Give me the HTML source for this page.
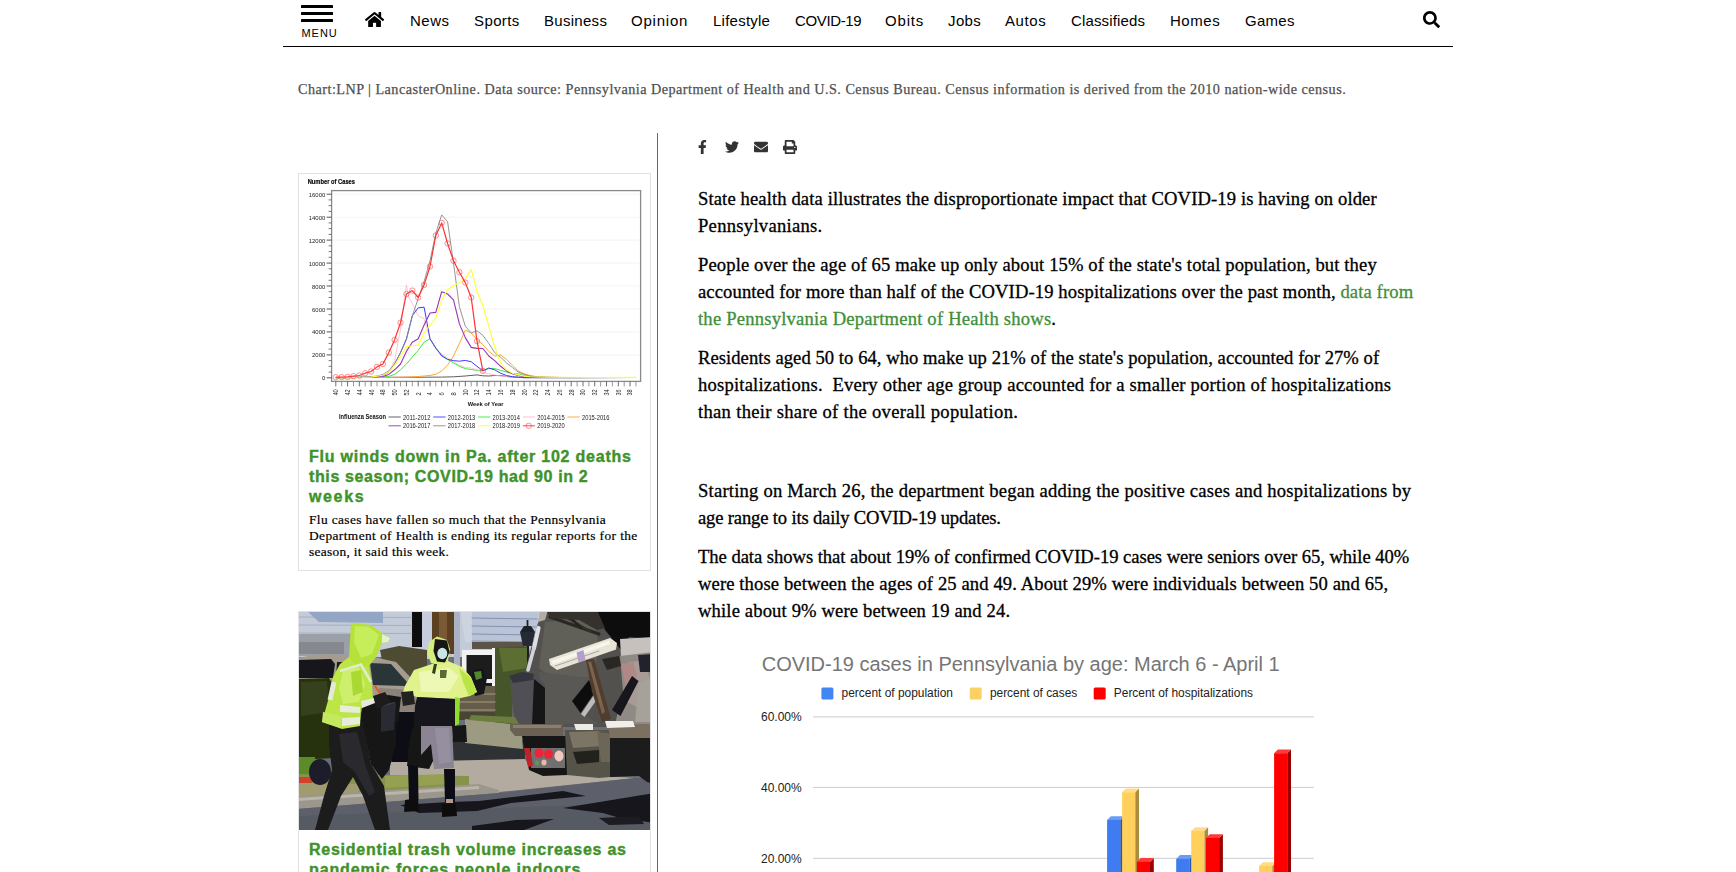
<!DOCTYPE html>
<html lang="en">
<head>
<meta charset="utf-8">
<title>LancasterOnline</title>
<style>
*{box-sizing:border-box;margin:0;padding:0}
html,body{width:1736px;height:872px;overflow:hidden;background:#fff}
body{position:relative;font-family:"Liberation Sans",sans-serif;color:#000}
.abs{position:absolute}
/* nav */
.bar{position:absolute;left:301px;width:32px;height:3px;background:#000;border-radius:0.5px}
.menu{position:absolute;left:301.5px;top:27px;font-size:11px;line-height:12px;letter-spacing:0.95px;color:#000}
.nav a{position:absolute;top:12px;font-size:15px;line-height:18px;color:#000;text-decoration:none;white-space:nowrap}
.navline{position:absolute;left:283px;top:46px;width:1170px;height:1px;background:#000}
/* caption */
.cap{position:absolute;left:298px;top:80px;font-family:"Liberation Serif",serif;font-size:14.2px;line-height:18px;color:#505050;white-space:nowrap;-webkit-text-stroke:0.25px #505050}
/* divider */
.divider{position:absolute;left:657px;top:133px;width:1px;height:760px;background:#67676d}
/* cards */
.card{position:absolute;left:298px;width:353px;border:1px solid #e2e2e2;background:#fff}
.hl{position:absolute;left:309px;font-weight:bold;font-size:16px;line-height:20px;color:#40922a;white-space:nowrap;-webkit-text-stroke:0.4px #40922a}
.sm{position:absolute;left:309px;font-family:"Liberation Serif",serif;font-size:13.4px;line-height:16px;color:#000;white-space:nowrap;-webkit-text-stroke:0.2px #000}
/* article */
.p{position:absolute;left:698px;margin-top:-1px;font-family:"Liberation Serif",serif;font-size:18.6px;line-height:27px;color:#000;white-space:nowrap;-webkit-text-stroke:0.3px #000}
.p .g{color:#3f8f3a;-webkit-text-stroke:0.3px #3f8f3a}
</style>
<style id="ls">
#n1{letter-spacing:0.521px}
#n2{letter-spacing:0.390px}
#n3{letter-spacing:0.291px}
#n4{letter-spacing:0.785px}
#n5{letter-spacing:0.241px}
#n6{letter-spacing:-0.373px}
#n7{letter-spacing:0.837px}
#n8{letter-spacing:0.378px}
#n9{letter-spacing:0.568px}
#n10{letter-spacing:0.152px}
#n11{letter-spacing:0.537px}
#n12{letter-spacing:0.268px}
#cap{letter-spacing:0.480px}
#h1{letter-spacing:0.771px}
#h2{letter-spacing:0.620px}
#h3{letter-spacing:1.631px}
#h4{letter-spacing:0.751px}
#h5{letter-spacing:0.864px}
#s1{letter-spacing:0.373px}
#s2{letter-spacing:0.404px}
#s3{letter-spacing:0.300px}
#l1{letter-spacing:0.118px}
#l2{letter-spacing:0.277px}
#l3{letter-spacing:0.115px}
#l4{letter-spacing:0.113px}
#l5{letter-spacing:0.207px}
#l6{letter-spacing:0.051px}
#l7{letter-spacing:0.199px}
#l8{letter-spacing:0.302px}
#l9{letter-spacing:0.209px}
#l10{letter-spacing:-0.163px}
#l11{letter-spacing:-0.039px}
#l12{letter-spacing:0.111px}
#l13{letter-spacing:0.145px}
</style>
</head>
<body>

<!-- NAV -->
<div class="bar" style="top:5px"></div>
<div class="bar" style="top:12px"></div>
<div class="bar" style="top:19px"></div>
<div class="menu">MENU</div>
<svg class="abs" style="left:365px;top:10.5px" width="19.1" height="17" viewBox="0 0 576 512"><path fill="#000" d="M280.37 148.26L96 300.11V464a16 16 0 0 0 16 16l112.060-.29a16 16 0 0 0 15.920-16V368a16 16 0 0 1 16-16h64a16 16 0 0 1 16 16v95.640a16 16 0 0 0 16 16.050L464 480a16 16 0 0 0 16-16V300L295.670 148.260a12.190 12.190 0 0 0-15.300 0zM571.600 251.470L488 182.560V44.050a12 12 0 0 0-12-12h-56a12 12 0 0 0-12 12v72.610L318.470 43a48 48 0 0 0-61 0L4.340 251.470a12 12 0 0 0-1.600 16.900l25.500 31A12 12 0 0 0 45.150 301l235.220-193.740a12.190 12.190 0 0 1 15.300 0L530.900 301a12 12 0 0 0 16.900-1.600l25.500-31a12 12 0 0 0-1.700-16.930z"/></svg>
<div class="nav">
<a id="n1" style="left:410px">News</a>
<a id="n2" style="left:474px">Sports</a>
<a id="n3" style="left:544px">Business</a>
<a id="n4" style="left:631px">Opinion</a>
<a id="n5" style="left:713px">Lifestyle</a>
<a id="n6" style="left:795px">COVID-19</a>
<a id="n7" style="left:885px">Obits</a>
<a id="n8" style="left:948px">Jobs</a>
<a id="n9" style="left:1005px">Autos</a>
<a id="n10" style="left:1071px">Classifieds</a>
<a id="n11" style="left:1170px">Homes</a>
<a id="n12" style="left:1245px">Games</a>
</div>
<svg class="abs" style="left:1423px;top:10.6px" width="17" height="17" viewBox="0 0 512 512"><path fill="#000" d="M505 442.700L405.300 343c-4.500-4.500-10.600-7-17-7H372c27.600-35.300 44-79.700 44-128C416 93.100 322.900 0 208 0S0 93.100 0 208s93.100 208 208 208c48.300 0 92.700-16.400 128-44v16.300c0 6.400 2.500 12.500 7 17l99.700 99.700c9.400 9.400 24.600 9.400 33.900 0l28.300-28.300c9.400-9.400 9.400-24.600.1-34zM208 336c-70.700 0-128-57.200-128-128 0-70.700 57.200-128 128-128 70.700 0 128 57.200 128 128 0 70.700-57.200 128-128 128z"/></svg>
<div class="navline"></div>

<!-- CAPTION -->
<div class="cap" id="cap">Chart:LNP | LancasterOnline. Data source: Pennsylvania Department of Health and U.S. Census Bureau. Census information is derived from the 2010 nation-wide census.</div>

<!-- DIVIDER -->
<div class="divider"></div>

<!-- LEFT CARD 1 -->
<div class="card" style="top:173px;height:398px"></div>
<!--FLUCHART-->
<svg class="abs" style="left:299px;top:174px" width="351" height="266" viewBox="0 0 351 266" font-family="Liberation Sans, sans-serif">
<defs><filter id="fb" x="-2%" y="-2%" width="104%" height="104%"><feGaussianBlur stdDeviation="0.5"/></filter></defs>
<g filter="url(#fb)">
<text x="8.7" y="10.2" font-size="6.4" font-weight="bold" fill="#000" stroke="#000" stroke-width="0.15" textLength="47.3" lengthAdjust="spacingAndGlyphs">Number of Cases</text>
<rect x="32.6" y="16.6" width="309.0" height="190.8" fill="#fff" stroke="#8a8a8a" stroke-width="1.3"/>
<line x1="27.6" x2="32.6" y1="203.8" y2="203.8" stroke="#444" stroke-width="0.9"/>
<text x="26.2" y="206.3" font-size="5.9" text-anchor="end" fill="#1a1a1a">0</text>
<line x1="33.6" x2="340.6" y1="180.9" y2="180.9" stroke="#efefef" stroke-width="0.7"/>
<line x1="27.6" x2="32.6" y1="180.9" y2="180.9" stroke="#444" stroke-width="0.9"/>
<text x="26.2" y="183.4" font-size="5.9" text-anchor="end" fill="#1a1a1a">2000</text>
<line x1="33.6" x2="340.6" y1="157.9" y2="157.9" stroke="#efefef" stroke-width="0.7"/>
<line x1="27.6" x2="32.6" y1="157.9" y2="157.9" stroke="#444" stroke-width="0.9"/>
<text x="26.2" y="160.4" font-size="5.9" text-anchor="end" fill="#1a1a1a">4000</text>
<line x1="33.6" x2="340.6" y1="135.0" y2="135.0" stroke="#efefef" stroke-width="0.7"/>
<line x1="27.6" x2="32.6" y1="135.0" y2="135.0" stroke="#444" stroke-width="0.9"/>
<text x="26.2" y="137.5" font-size="5.9" text-anchor="end" fill="#1a1a1a">6000</text>
<line x1="33.6" x2="340.6" y1="112.0" y2="112.0" stroke="#efefef" stroke-width="0.7"/>
<line x1="27.6" x2="32.6" y1="112.0" y2="112.0" stroke="#444" stroke-width="0.9"/>
<text x="26.2" y="114.5" font-size="5.9" text-anchor="end" fill="#1a1a1a">8000</text>
<line x1="33.6" x2="340.6" y1="89.1" y2="89.1" stroke="#efefef" stroke-width="0.7"/>
<line x1="27.6" x2="32.6" y1="89.1" y2="89.1" stroke="#444" stroke-width="0.9"/>
<text x="26.2" y="91.6" font-size="5.9" text-anchor="end" fill="#1a1a1a">10000</text>
<line x1="33.6" x2="340.6" y1="66.1" y2="66.1" stroke="#efefef" stroke-width="0.7"/>
<line x1="27.6" x2="32.6" y1="66.1" y2="66.1" stroke="#444" stroke-width="0.9"/>
<text x="26.2" y="68.6" font-size="5.9" text-anchor="end" fill="#1a1a1a">12000</text>
<line x1="33.6" x2="340.6" y1="43.2" y2="43.2" stroke="#efefef" stroke-width="0.7"/>
<line x1="27.6" x2="32.6" y1="43.2" y2="43.2" stroke="#444" stroke-width="0.9"/>
<text x="26.2" y="45.7" font-size="5.9" text-anchor="end" fill="#1a1a1a">14000</text>
<line x1="33.6" x2="340.6" y1="20.2" y2="20.2" stroke="#efefef" stroke-width="0.7"/>
<line x1="27.6" x2="32.6" y1="20.2" y2="20.2" stroke="#444" stroke-width="0.9"/>
<text x="26.2" y="22.7" font-size="5.9" text-anchor="end" fill="#1a1a1a">16000</text>
<line x1="29.6" x2="32.6" y1="198.1" y2="198.1" stroke="#555" stroke-width="0.8"/>
<line x1="29.6" x2="32.6" y1="192.3" y2="192.3" stroke="#555" stroke-width="0.8"/>
<line x1="29.6" x2="32.6" y1="186.6" y2="186.6" stroke="#555" stroke-width="0.8"/>
<line x1="29.6" x2="32.6" y1="175.1" y2="175.1" stroke="#555" stroke-width="0.8"/>
<line x1="29.6" x2="32.6" y1="169.4" y2="169.4" stroke="#555" stroke-width="0.8"/>
<line x1="29.6" x2="32.6" y1="163.6" y2="163.6" stroke="#555" stroke-width="0.8"/>
<line x1="29.6" x2="32.6" y1="152.2" y2="152.2" stroke="#555" stroke-width="0.8"/>
<line x1="29.6" x2="32.6" y1="146.4" y2="146.4" stroke="#555" stroke-width="0.8"/>
<line x1="29.6" x2="32.6" y1="140.7" y2="140.7" stroke="#555" stroke-width="0.8"/>
<line x1="29.6" x2="32.6" y1="129.2" y2="129.2" stroke="#555" stroke-width="0.8"/>
<line x1="29.6" x2="32.6" y1="123.5" y2="123.5" stroke="#555" stroke-width="0.8"/>
<line x1="29.6" x2="32.6" y1="117.7" y2="117.7" stroke="#555" stroke-width="0.8"/>
<line x1="29.6" x2="32.6" y1="106.3" y2="106.3" stroke="#555" stroke-width="0.8"/>
<line x1="29.6" x2="32.6" y1="100.5" y2="100.5" stroke="#555" stroke-width="0.8"/>
<line x1="29.6" x2="32.6" y1="94.8" y2="94.8" stroke="#555" stroke-width="0.8"/>
<line x1="29.6" x2="32.6" y1="83.3" y2="83.3" stroke="#555" stroke-width="0.8"/>
<line x1="29.6" x2="32.6" y1="77.6" y2="77.6" stroke="#555" stroke-width="0.8"/>
<line x1="29.6" x2="32.6" y1="71.8" y2="71.8" stroke="#555" stroke-width="0.8"/>
<line x1="29.6" x2="32.6" y1="60.4" y2="60.4" stroke="#555" stroke-width="0.8"/>
<line x1="29.6" x2="32.6" y1="54.6" y2="54.6" stroke="#555" stroke-width="0.8"/>
<line x1="29.6" x2="32.6" y1="48.9" y2="48.9" stroke="#555" stroke-width="0.8"/>
<line x1="29.6" x2="32.6" y1="37.4" y2="37.4" stroke="#555" stroke-width="0.8"/>
<line x1="29.6" x2="32.6" y1="31.7" y2="31.7" stroke="#555" stroke-width="0.8"/>
<line x1="29.6" x2="32.6" y1="25.9" y2="25.9" stroke="#555" stroke-width="0.8"/>
<line x1="36.8" x2="36.8" y1="207.4" y2="212.4" stroke="#555" stroke-width="0.85"/>
<line x1="42.7" x2="42.7" y1="207.4" y2="212.4" stroke="#888" stroke-width="0.85"/>
<line x1="48.6" x2="48.6" y1="207.4" y2="212.4" stroke="#555" stroke-width="0.85"/>
<line x1="54.5" x2="54.5" y1="207.4" y2="212.4" stroke="#888" stroke-width="0.85"/>
<line x1="60.3" x2="60.3" y1="207.4" y2="212.4" stroke="#555" stroke-width="0.85"/>
<line x1="66.2" x2="66.2" y1="207.4" y2="212.4" stroke="#888" stroke-width="0.85"/>
<line x1="72.1" x2="72.1" y1="207.4" y2="212.4" stroke="#555" stroke-width="0.85"/>
<line x1="78.0" x2="78.0" y1="207.4" y2="212.4" stroke="#888" stroke-width="0.85"/>
<line x1="83.9" x2="83.9" y1="207.4" y2="212.4" stroke="#555" stroke-width="0.85"/>
<line x1="89.8" x2="89.8" y1="207.4" y2="212.4" stroke="#888" stroke-width="0.85"/>
<line x1="95.6" x2="95.6" y1="207.4" y2="212.4" stroke="#555" stroke-width="0.85"/>
<line x1="101.5" x2="101.5" y1="207.4" y2="212.4" stroke="#888" stroke-width="0.85"/>
<line x1="107.4" x2="107.4" y1="207.4" y2="212.4" stroke="#555" stroke-width="0.85"/>
<line x1="113.3" x2="113.3" y1="207.4" y2="212.4" stroke="#888" stroke-width="0.85"/>
<line x1="119.2" x2="119.2" y1="207.4" y2="212.4" stroke="#555" stroke-width="0.85"/>
<line x1="125.1" x2="125.1" y1="207.4" y2="212.4" stroke="#888" stroke-width="0.85"/>
<line x1="131.0" x2="131.0" y1="207.4" y2="212.4" stroke="#555" stroke-width="0.85"/>
<line x1="136.8" x2="136.8" y1="207.4" y2="212.4" stroke="#888" stroke-width="0.85"/>
<line x1="142.7" x2="142.7" y1="207.4" y2="212.4" stroke="#555" stroke-width="0.85"/>
<line x1="148.6" x2="148.6" y1="207.4" y2="212.4" stroke="#888" stroke-width="0.85"/>
<line x1="154.5" x2="154.5" y1="207.4" y2="212.4" stroke="#555" stroke-width="0.85"/>
<line x1="160.4" x2="160.4" y1="207.4" y2="212.4" stroke="#888" stroke-width="0.85"/>
<line x1="166.3" x2="166.3" y1="207.4" y2="212.4" stroke="#555" stroke-width="0.85"/>
<line x1="172.2" x2="172.2" y1="207.4" y2="212.4" stroke="#888" stroke-width="0.85"/>
<line x1="178.0" x2="178.0" y1="207.4" y2="212.4" stroke="#555" stroke-width="0.85"/>
<line x1="183.9" x2="183.9" y1="207.4" y2="212.4" stroke="#888" stroke-width="0.85"/>
<line x1="189.8" x2="189.8" y1="207.4" y2="212.4" stroke="#555" stroke-width="0.85"/>
<line x1="195.7" x2="195.7" y1="207.4" y2="212.4" stroke="#888" stroke-width="0.85"/>
<line x1="201.6" x2="201.6" y1="207.4" y2="212.4" stroke="#555" stroke-width="0.85"/>
<line x1="207.5" x2="207.5" y1="207.4" y2="212.4" stroke="#888" stroke-width="0.85"/>
<line x1="213.4" x2="213.4" y1="207.4" y2="212.4" stroke="#555" stroke-width="0.85"/>
<line x1="219.2" x2="219.2" y1="207.4" y2="212.4" stroke="#888" stroke-width="0.85"/>
<line x1="225.1" x2="225.1" y1="207.4" y2="212.4" stroke="#555" stroke-width="0.85"/>
<line x1="231.0" x2="231.0" y1="207.4" y2="212.4" stroke="#888" stroke-width="0.85"/>
<line x1="236.9" x2="236.9" y1="207.4" y2="212.4" stroke="#555" stroke-width="0.85"/>
<line x1="242.8" x2="242.8" y1="207.4" y2="212.4" stroke="#888" stroke-width="0.85"/>
<line x1="248.7" x2="248.7" y1="207.4" y2="212.4" stroke="#555" stroke-width="0.85"/>
<line x1="254.5" x2="254.5" y1="207.4" y2="212.4" stroke="#888" stroke-width="0.85"/>
<line x1="260.4" x2="260.4" y1="207.4" y2="212.4" stroke="#555" stroke-width="0.85"/>
<line x1="266.3" x2="266.3" y1="207.4" y2="212.4" stroke="#888" stroke-width="0.85"/>
<line x1="272.2" x2="272.2" y1="207.4" y2="212.4" stroke="#555" stroke-width="0.85"/>
<line x1="278.1" x2="278.1" y1="207.4" y2="212.4" stroke="#888" stroke-width="0.85"/>
<line x1="284.0" x2="284.0" y1="207.4" y2="212.4" stroke="#555" stroke-width="0.85"/>
<line x1="289.9" x2="289.9" y1="207.4" y2="212.4" stroke="#888" stroke-width="0.85"/>
<line x1="295.7" x2="295.7" y1="207.4" y2="212.4" stroke="#555" stroke-width="0.85"/>
<line x1="301.6" x2="301.6" y1="207.4" y2="212.4" stroke="#888" stroke-width="0.85"/>
<line x1="307.5" x2="307.5" y1="207.4" y2="212.4" stroke="#555" stroke-width="0.85"/>
<line x1="313.4" x2="313.4" y1="207.4" y2="212.4" stroke="#888" stroke-width="0.85"/>
<line x1="319.3" x2="319.3" y1="207.4" y2="212.4" stroke="#555" stroke-width="0.85"/>
<line x1="325.2" x2="325.2" y1="207.4" y2="212.4" stroke="#888" stroke-width="0.85"/>
<line x1="331.0" x2="331.0" y1="207.4" y2="212.4" stroke="#555" stroke-width="0.85"/>
<line x1="336.9" x2="336.9" y1="207.4" y2="212.4" stroke="#888" stroke-width="0.85"/>
<text transform="translate(39.2,221.6) rotate(-90)" font-size="6.8" fill="#222" textLength="6.2" lengthAdjust="spacingAndGlyphs">40</text>
<text transform="translate(51.0,221.6) rotate(-90)" font-size="6.8" fill="#222" textLength="6.2" lengthAdjust="spacingAndGlyphs">42</text>
<text transform="translate(62.7,221.6) rotate(-90)" font-size="6.8" fill="#222" textLength="6.2" lengthAdjust="spacingAndGlyphs">44</text>
<text transform="translate(74.5,221.6) rotate(-90)" font-size="6.8" fill="#222" textLength="6.2" lengthAdjust="spacingAndGlyphs">46</text>
<text transform="translate(86.3,221.6) rotate(-90)" font-size="6.8" fill="#222" textLength="6.2" lengthAdjust="spacingAndGlyphs">48</text>
<text transform="translate(98.0,221.6) rotate(-90)" font-size="6.8" fill="#222" textLength="6.2" lengthAdjust="spacingAndGlyphs">50</text>
<text transform="translate(109.8,221.6) rotate(-90)" font-size="6.8" fill="#222" textLength="6.2" lengthAdjust="spacingAndGlyphs">52</text>
<text transform="translate(121.6,221.6) rotate(-90)" font-size="6.8" fill="#222" textLength="3.2" lengthAdjust="spacingAndGlyphs">2</text>
<text transform="translate(133.4,221.6) rotate(-90)" font-size="6.8" fill="#222" textLength="3.2" lengthAdjust="spacingAndGlyphs">4</text>
<text transform="translate(145.1,221.6) rotate(-90)" font-size="6.8" fill="#222" textLength="3.2" lengthAdjust="spacingAndGlyphs">6</text>
<text transform="translate(156.9,221.6) rotate(-90)" font-size="6.8" fill="#222" textLength="3.2" lengthAdjust="spacingAndGlyphs">8</text>
<text transform="translate(168.7,221.6) rotate(-90)" font-size="6.8" fill="#222" textLength="6.2" lengthAdjust="spacingAndGlyphs">10</text>
<text transform="translate(180.4,221.6) rotate(-90)" font-size="6.8" fill="#222" textLength="6.2" lengthAdjust="spacingAndGlyphs">12</text>
<text transform="translate(192.2,221.6) rotate(-90)" font-size="6.8" fill="#222" textLength="6.2" lengthAdjust="spacingAndGlyphs">14</text>
<text transform="translate(204.0,221.6) rotate(-90)" font-size="6.8" fill="#222" textLength="6.2" lengthAdjust="spacingAndGlyphs">16</text>
<text transform="translate(215.8,221.6) rotate(-90)" font-size="6.8" fill="#222" textLength="6.2" lengthAdjust="spacingAndGlyphs">18</text>
<text transform="translate(227.5,221.6) rotate(-90)" font-size="6.8" fill="#222" textLength="6.2" lengthAdjust="spacingAndGlyphs">20</text>
<text transform="translate(239.3,221.6) rotate(-90)" font-size="6.8" fill="#222" textLength="6.2" lengthAdjust="spacingAndGlyphs">22</text>
<text transform="translate(251.1,221.6) rotate(-90)" font-size="6.8" fill="#222" textLength="6.2" lengthAdjust="spacingAndGlyphs">24</text>
<text transform="translate(262.8,221.6) rotate(-90)" font-size="6.8" fill="#222" textLength="6.2" lengthAdjust="spacingAndGlyphs">26</text>
<text transform="translate(274.6,221.6) rotate(-90)" font-size="6.8" fill="#222" textLength="6.2" lengthAdjust="spacingAndGlyphs">28</text>
<text transform="translate(286.4,221.6) rotate(-90)" font-size="6.8" fill="#222" textLength="6.2" lengthAdjust="spacingAndGlyphs">30</text>
<text transform="translate(298.1,221.6) rotate(-90)" font-size="6.8" fill="#222" textLength="6.2" lengthAdjust="spacingAndGlyphs">32</text>
<text transform="translate(309.9,221.6) rotate(-90)" font-size="6.8" fill="#222" textLength="6.2" lengthAdjust="spacingAndGlyphs">34</text>
<text transform="translate(321.7,221.6) rotate(-90)" font-size="6.8" fill="#222" textLength="6.2" lengthAdjust="spacingAndGlyphs">36</text>
<text transform="translate(333.4,221.6) rotate(-90)" font-size="6.8" fill="#222" textLength="6.2" lengthAdjust="spacingAndGlyphs">38</text>
<text x="186.6" y="232.0" font-size="6.2" font-weight="bold" text-anchor="middle" fill="#111" textLength="35.8" lengthAdjust="spacingAndGlyphs">Week of Year</text>
<clipPath id="fc"><rect x="32.6" y="16.6" width="309.0" height="190.8"/></clipPath><g clip-path="url(#fc)" fill="none" stroke-linejoin="round">
<path d="M36.8 203.6 L66.2 203.5 L95.6 203.3 L125.1 203.2 L142.7 203.1 L154.5 202.8 L166.3 202.0 L178.0 200.9 L183.9 201.8 L189.8 202.0 L195.7 201.5 L201.6 201.6 L207.5 202.4 L213.4 203.1 L225.1 203.6 L272.2 203.7 L336.9 203.5" stroke="#555" stroke-width="0.95"/>
<path d="M36.8 203.7 L72.1 203.5 L83.9 203.1 L89.8 202.4 L95.6 200.4 L101.5 195.8 L107.4 190.0 L113.3 183.1 L119.2 176.3 L125.1 168.2 L131.0 164.8 L136.8 174.0 L142.7 180.9 L148.6 185.4 L154.5 188.9 L160.4 192.3 L166.3 194.6 L172.2 195.5 L178.0 196.3 L183.9 196.3 L189.8 194.6 L195.7 194.6 L201.6 196.3 L207.5 198.1 L213.4 199.7 L219.2 199.8 L225.1 201.5 L231.0 202.7 L236.9 203.2 L248.7 203.6 L336.9 203.5" stroke="#33ee33" stroke-width="1.0"/>
<path d="M36.8 203.7 L83.9 203.5 L107.4 203.1 L119.2 202.5 L125.1 202.0 L131.0 201.4 L136.8 200.4 L142.7 196.9 L148.6 191.2 L154.5 182.0 L160.4 169.4 L166.3 156.2 L172.2 159.0 L178.0 165.9 L183.9 170.5 L189.8 177.4 L195.7 182.0 L201.6 180.9 L207.5 185.4 L213.4 191.2 L219.2 196.9 L225.1 199.8 L231.0 201.5 L236.9 202.5 L248.7 203.2 L272.2 203.6 L336.9 203.5" stroke="#ffa632" stroke-width="1.0"/>
<path d="M36.8 203.6 L72.1 203.1 L83.9 202.1 L89.8 198.1 L95.6 186.6 L101.5 155.6 L107.4 110.9 L109.8 123.5 L113.3 129.2 L119.2 141.8 L125.1 144.7 L131.0 164.8 L136.8 175.1 L142.7 179.7 L148.6 184.3 L154.5 187.7 L160.4 191.2 L166.3 193.5 L172.2 194.0 L178.0 195.8 L183.9 198.1 L189.8 199.8 L195.7 200.9 L201.6 202.1 L213.4 203.1 L236.9 203.6 L336.9 203.5" stroke="#ffb6c8" stroke-width="0.8"/>
<path d="M36.8 203.6 L60.3 203.2 L72.1 202.9 L78.0 202.3 L83.9 201.3 L89.8 198.1 L95.6 190.0 L101.5 178.6 L107.4 164.8 L113.3 141.8 L119.2 133.8 L125.1 133.2 L131.0 164.8 L136.8 174.0 L142.7 182.0 L148.6 185.4 L154.5 186.6 L160.4 187.2 L166.3 186.4 L172.2 187.7 L178.0 192.3 L183.9 196.9 L189.8 194.0 L195.7 195.8 L201.6 199.2 L207.5 201.5 L213.4 202.7 L219.2 203.2 L225.1 203.7 L336.9 203.5" stroke="#3b3bff" stroke-width="1.0"/>
<path d="M36.8 203.7 L72.1 203.3 L83.9 202.5 L89.8 200.4 L95.6 195.8 L101.5 190.0 L107.4 177.4 L113.3 168.2 L119.2 164.8 L125.1 151.0 L131.0 139.0 L136.8 138.4 L142.7 117.7 L148.6 120.0 L154.5 125.8 L160.4 149.9 L166.3 163.6 L172.2 173.4 L178.0 174.4 L183.9 174.5 L189.8 182.0 L195.7 186.6 L201.6 192.3 L207.5 196.9 L213.4 199.8 L219.2 201.5 L225.1 202.7 L236.9 203.3 L336.9 203.5" stroke="#9932b8" stroke-width="1.1"/>
<path d="M36.8 203.6 L66.2 203.1 L78.0 202.1 L83.9 200.4 L89.8 196.9 L95.6 190.0 L101.5 178.6 L107.4 165.9 L113.3 141.8 L119.2 124.6 L125.1 107.4 L131.0 86.8 L136.8 59.2 L142.7 40.9 L148.6 47.7 L154.5 89.1 L160.4 132.7 L166.3 152.2 L172.2 159.0 L178.0 156.8 L183.9 161.3 L189.8 169.4 L195.7 178.6 L201.6 183.1 L207.5 188.9 L213.4 193.5 L219.2 198.1 L225.1 200.4 L231.0 202.1 L236.9 202.9 L260.4 203.5 L336.9 203.5" stroke="#8a8a8a" stroke-width="0.9"/>
<path d="M36.8 203.7 L72.1 203.1 L83.9 201.3 L89.8 198.1 L95.6 191.2 L101.5 182.0 L107.4 172.8 L113.3 171.7 L119.2 171.1 L125.1 159.0 L131.0 151.0 L136.8 144.1 L142.7 125.8 L148.6 115.4 L154.5 112.0 L160.4 108.6 L166.3 105.1 L172.2 95.4 L178.0 117.7 L183.9 131.5 L189.8 152.2 L195.7 172.8 L201.6 188.9 L207.5 195.8 L213.4 199.2 L219.2 200.9 L225.1 202.1 L231.0 202.7 L248.7 203.2 L295.7 203.5 L336.9 203.4" stroke="#ffff30" stroke-width="1.1"/>
<path d="M36.8 203.2 L42.7 203.1 L48.6 202.9 L54.5 202.1 L60.3 201.5 L66.2 199.2 L72.1 197.5 L78.0 192.9 L83.9 190.0 L89.8 178.6 L95.6 165.9 L101.5 148.7 L107.4 120.0 L113.3 116.6 L119.2 123.5 L125.1 110.9 L131.0 92.5 L136.8 61.5 L142.7 48.9 L148.6 69.5 L154.5 86.8 L160.4 98.2 L166.3 108.6 L172.2 123.5 L178.0 167.1 L183.9 196.9" stroke="#ff3030" stroke-width="1.2"/>
<circle cx="36.8" cy="203.2" r="2.7" stroke="#ff4545" stroke-width="0.6"/>
<circle cx="42.7" cy="203.1" r="2.7" stroke="#ff4545" stroke-width="0.6"/>
<circle cx="48.6" cy="202.9" r="2.7" stroke="#ff4545" stroke-width="0.6"/>
<circle cx="54.5" cy="202.1" r="2.7" stroke="#ff4545" stroke-width="0.6"/>
<circle cx="60.3" cy="201.5" r="2.7" stroke="#ff4545" stroke-width="0.6"/>
<circle cx="66.2" cy="199.2" r="2.7" stroke="#ff4545" stroke-width="0.6"/>
<circle cx="72.1" cy="197.5" r="2.7" stroke="#ff4545" stroke-width="0.6"/>
<circle cx="78.0" cy="192.9" r="2.7" stroke="#ff4545" stroke-width="0.6"/>
<circle cx="83.9" cy="190.0" r="2.7" stroke="#ff4545" stroke-width="0.6"/>
<circle cx="89.8" cy="178.6" r="2.7" stroke="#ff4545" stroke-width="0.6"/>
<circle cx="95.6" cy="165.9" r="2.7" stroke="#ff4545" stroke-width="0.6"/>
<circle cx="101.5" cy="148.7" r="2.7" stroke="#ff4545" stroke-width="0.6"/>
<circle cx="107.4" cy="120.0" r="2.7" stroke="#ff4545" stroke-width="0.6"/>
<circle cx="113.3" cy="116.6" r="2.7" stroke="#ff4545" stroke-width="0.6"/>
<circle cx="119.2" cy="123.5" r="2.7" stroke="#ff4545" stroke-width="0.6"/>
<circle cx="125.1" cy="110.9" r="2.7" stroke="#ff4545" stroke-width="0.6"/>
<circle cx="131.0" cy="92.5" r="2.7" stroke="#ff4545" stroke-width="0.6"/>
<circle cx="136.8" cy="61.5" r="2.7" stroke="#ff4545" stroke-width="0.6"/>
<circle cx="142.7" cy="48.9" r="2.7" stroke="#ff4545" stroke-width="0.6"/>
<circle cx="148.6" cy="69.5" r="2.7" stroke="#ff4545" stroke-width="0.6"/>
<circle cx="154.5" cy="86.8" r="2.7" stroke="#ff4545" stroke-width="0.6"/>
<circle cx="160.4" cy="98.2" r="2.7" stroke="#ff4545" stroke-width="0.6"/>
<circle cx="166.3" cy="108.6" r="2.7" stroke="#ff4545" stroke-width="0.6"/>
<circle cx="172.2" cy="123.5" r="2.7" stroke="#ff4545" stroke-width="0.6"/>
<circle cx="178.0" cy="167.1" r="2.7" stroke="#ff4545" stroke-width="0.6"/>
<circle cx="183.9" cy="196.9" r="2.7" stroke="#ff4545" stroke-width="0.6"/>
</g>
<text x="40.0" y="245.4" font-size="6.8" font-weight="bold" fill="#111" textLength="47" lengthAdjust="spacingAndGlyphs">Influenza Season</text>
<line x1="89.5" x2="101.8" y1="243.0" y2="243.0" stroke="#555" stroke-width="0.9"/>
<text x="104.0" y="245.5" font-size="7" fill="#222" textLength="27.5" lengthAdjust="spacingAndGlyphs">2011-2012</text>
<line x1="134.2" x2="146.6" y1="243.0" y2="243.0" stroke="#3b3bff" stroke-width="0.9"/>
<text x="148.8" y="245.5" font-size="7" fill="#222" textLength="27.5" lengthAdjust="spacingAndGlyphs">2012-2013</text>
<line x1="179.0" x2="191.3" y1="243.0" y2="243.0" stroke="#33ee33" stroke-width="0.9"/>
<text x="193.5" y="245.5" font-size="7" fill="#222" textLength="27.5" lengthAdjust="spacingAndGlyphs">2013-2014</text>
<line x1="223.8" x2="236.1" y1="243.0" y2="243.0" stroke="#ffb6c8" stroke-width="0.9"/>
<text x="238.2" y="245.5" font-size="7" fill="#222" textLength="27.5" lengthAdjust="spacingAndGlyphs">2014-2015</text>
<line x1="268.5" x2="280.8" y1="243.0" y2="243.0" stroke="#ffa632" stroke-width="0.9"/>
<text x="283.0" y="245.5" font-size="7" fill="#222" textLength="27.5" lengthAdjust="spacingAndGlyphs">2015-2016</text>
<line x1="89.5" x2="101.8" y1="251.8" y2="251.8" stroke="#9932b8" stroke-width="0.9"/>
<text x="104.0" y="254.3" font-size="7" fill="#222" textLength="27.5" lengthAdjust="spacingAndGlyphs">2016-2017</text>
<line x1="134.2" x2="146.6" y1="251.8" y2="251.8" stroke="#8a8a8a" stroke-width="0.9"/>
<text x="148.8" y="254.3" font-size="7" fill="#222" textLength="27.5" lengthAdjust="spacingAndGlyphs">2017-2018</text>
<line x1="179.0" x2="191.3" y1="251.8" y2="251.8" stroke="#ffff30" stroke-width="0.9"/>
<text x="193.5" y="254.3" font-size="7" fill="#222" textLength="27.5" lengthAdjust="spacingAndGlyphs">2018-2019</text>
<line x1="223.8" x2="236.1" y1="251.8" y2="251.8" stroke="#ff3030" stroke-width="0.9"/>
<circle cx="229.8" cy="251.8" r="2.7" fill="none" stroke="#ff4545" stroke-width="0.6"/>
<text x="238.2" y="254.3" font-size="7" fill="#222" textLength="27.5" lengthAdjust="spacingAndGlyphs">2019-2020</text>
</g></svg>
<!--/FLUCHART-->
<div class="hl" id="h1" style="top:447px">Flu winds down in Pa. after 102 deaths</div>
<div class="hl" id="h2" style="top:467px">this season; COVID-19 had 90 in 2</div>
<div class="hl" id="h3" style="top:487px">weeks</div>
<div class="sm" id="s1" style="top:512px">Flu cases have fallen so much that the Pennsylvania</div>
<div class="sm" id="s2" style="top:528px">Department of Health is ending its regular reports for the</div>
<div class="sm" id="s3" style="top:544px">season, it said this week.</div>

<!-- LEFT CARD 2 -->
<div class="card" style="top:611px;height:300px"></div>
<!--PHOTO-->
<svg class="abs" style="left:299px;top:612px" width="351" height="218" viewBox="0 0 351 218">
<defs><filter id="pb" x="-5%" y="-5%" width="110%" height="110%"><feGaussianBlur stdDeviation="0.7"/></filter><clipPath id="pc"><rect x="0" y="0" width="351" height="218"/></clipPath></defs>
<g clip-path="url(#pc)"><rect x="0" y="0" width="351" height="218" fill="#6a6e76"/><g filter="url(#pb)">
<rect x="-5" y="-5" width="250" height="50" fill="#c3cad8" />
<polygon points="7,-2 84,-2 84,11 20,10" fill="#93a6c6" />
<rect x="-5" y="22" width="60" height="22" fill="#9a9fa8" />
<rect x="-5" y="30" width="50" height="12" fill="#85898f" />
<rect x="113" y="-5" width="10" height="40" fill="#0b0b10" />
<rect x="123" y="-5" width="10" height="52" fill="#c6ccdc" />
<rect x="133" y="-5" width="22" height="47" fill="#5b3f20" />
<rect x="140" y="0" width="8" height="30" fill="#7a5a34" />
<rect x="155" y="-5" width="6" height="62" fill="#aab2c4" />
<polygon points="161,-5 180,-5 180,30 166,30" fill="#cdd3df" />
<rect x="173" y="-5" width="66" height="40" fill="#b9c4d8" />
<line x1="173" y1="6" x2="238" y2="7" stroke="#7a86a0" stroke-width="0.8" stroke-linecap="round"/>
<line x1="173" y1="14" x2="238" y2="15" stroke="#7a86a0" stroke-width="0.8" stroke-linecap="round"/>
<line x1="173" y1="22" x2="238" y2="23" stroke="#7a86a0" stroke-width="0.8" stroke-linecap="round"/>
<line x1="173" y1="29" x2="238" y2="30" stroke="#7a86a0" stroke-width="0.8" stroke-linecap="round"/>
<line x1="-2" y1="5" x2="113" y2="5.5" stroke="#9aa4ba" stroke-width="0.7" stroke-linecap="round"/>
<line x1="-2" y1="13" x2="113" y2="13.5" stroke="#9aa4ba" stroke-width="0.7" stroke-linecap="round"/>
<line x1="-2" y1="21" x2="113" y2="21.5" stroke="#9aa4ba" stroke-width="0.7" stroke-linecap="round"/>
<rect x="173" y="30" width="52" height="7" fill="#5c5248" />
<polygon points="81,38 100,34 128,38 128,64 100,66 85,58" fill="#4d4c30" />
<rect x="163" y="43" width="40" height="32" fill="#1c1c1c" />
<rect x="163" y="38" width="42" height="5" fill="#f2f2f2" />
<rect x="163" y="38" width="4.5" height="22" fill="#f2f2f2" />
<rect x="193" y="36" width="6" height="38" fill="#f4f4f4" />
<polygon points="198,39 201,38 208,46 205,49" fill="#f4f4f4" />
<rect x="183" y="67" width="13" height="4" fill="#f0f0f0" />
<polygon points="196,36 230,34 232,62 214,64 213,112 196,112" fill="#46542a" />
<polygon points="200,36 228,36 228,56 204,60" fill="#5d6e30" />
<polygon points="221,20 236,20 233,34 224,34" fill="#272b36" />
<polygon points="225,14 232,14 236,20 221,20" fill="#1e222c" />
<rect x="227.6" y="8" width="1.8" height="8" fill="#1e222c" />
<rect x="228" y="34" width="2" height="30" fill="#1c1c20" />
<rect x="158" y="74" width="38" height="33" fill="#655d4a" />
<line x1="158" y1="82" x2="196" y2="82" stroke="#8f866c" stroke-width="1.3" stroke-linecap="round"/>
<line x1="158" y1="90" x2="196" y2="90" stroke="#8f866c" stroke-width="1.3" stroke-linecap="round"/>
<line x1="158" y1="98" x2="196" y2="98" stroke="#8f866c" stroke-width="1.3" stroke-linecap="round"/>
<rect x="158" y="100" width="38" height="8" fill="#4a4436" />
<polygon points="-2,46 20,42 70,44 97,50 112,66 118,80 118,100 -2,100" fill="#a59c90" />
<polygon points="-2,48 32,47 36,52 34,66 -2,66" fill="#13171c" />
<polygon points="38,50 48,50 48,66 37,66" fill="#1a1e24" />
<polygon points="71,51 92,52 108,70 106,74 74,73" fill="#2b3538" />
<polygon points="80,76 116,78 118,100 80,100" fill="#8b837a" />
<rect x="92" y="100" width="30" height="10" fill="#2a2a2c" />
<polygon points="-2,67 30,66 34,72 34,146 -2,148" fill="#28320f" />
<polygon points="2,70 28,69 30,100 2,104" fill="#34411a" />
<polygon points="244,-3 355,-3 355,115 216,115 211,72 226,60 232,36 238,14" fill="#53514d" />
<polygon points="246,10 296,6 300,40 292,64 262,74 240,56" fill="#605e59" />
<polygon points="240,60 292,66 280,100 300,112 246,112" fill="#5a5955" />
<line x1="251" y1="5" x2="300" y2="22" stroke="#2a2826" stroke-width="3.2" stroke-linecap="round"/>
<line x1="262" y1="2" x2="292" y2="20" stroke="#33302c" stroke-width="2.2" stroke-linecap="round"/>
<line x1="270" y1="4" x2="282" y2="16" stroke="#25221f" stroke-width="2" stroke-linecap="round"/>
<polygon points="297,-3 355,-3 355,27 330,25 322,38 316,30 306,18" fill="#0a0a0a" />
<polygon points="246,-2 298,-2 306,16 298,18 280,8 252,6" fill="#34312d" />
<line x1="239.5" y1="16" x2="235" y2="36" stroke="#dedee6" stroke-width="4.2" stroke-linecap="round"/>
<line x1="235" y1="36" x2="229" y2="58" stroke="#d2d2da" stroke-width="3.6" stroke-linecap="round"/>
<polygon points="241,-2 249,-2 246,8 239,10" fill="#b5ada5" />
<polygon points="321,27 355,25 355,44 322,46" fill="#c6c1bc" />
<polygon points="321,44 355,40 355,112 316,112 324,80" fill="#8f8a84" />
<polygon points="330,50 346,48 352,72 340,96 328,90" fill="#a89a96" />
<polygon points="322,52 334,50 338,64 328,80" fill="#b08886" />
<polygon points="339,43 355,42 355,60 341,60" fill="#20242a" />
<polygon points="303,47 320,44 322,54 308,58" fill="#2c2622" />
<polygon points="340,70 355,66 355,110 336,110" fill="#a6a29a" />
<polygon points="290,68 295.5,81 281.5,101 273,89" fill="#101010" />
<polygon points="295.5,82 299,86 285.5,105 282,102" fill="#bcbcbc" />
<polygon points="333,64 339.5,69 321.5,104 313,98" fill="#15151a" />
<polygon points="287,48 295,47 312,107 303,110 293,80" fill="#513c2e" />
<polygon points="289,50 292,49.5 306,100 303,102" fill="#7a6450" />
<polygon points="210,64 223,60 235,62 246,72 246,115 218,115 214,79" fill="#505055" />
<polygon points="235,67 246,76 246,115 233,115" fill="#121214" />
<polygon points="210,64 223,60 235,62 234,68 214,71" fill="#35353c" />
<polygon points="250,47 311,26 318,31 317,37.5 258,58 251,53" fill="#e8e4d5" />
<polygon points="252,49 310,28.5 311,32 254,52.5" fill="#f7f5ec" />
<line x1="256" y1="54" x2="300" y2="39" stroke="#8a8890" stroke-width="0.7" stroke-linecap="round"/>
<polygon points="277.5,40.5 284.5,38 286.5,48 279.5,50.5" fill="#b39fca" />
<polygon points="173,58 184,56 188,66 185,82 176,84 172,72" fill="#17191a" />
<polygon points="175,60 182,59 183,66 177,68" fill="#4f8a2a" />
<polygon points="91,128 180,126 226,128 226,150 91,152" fill="#2e3036" />
<polygon points="166,107 222,113 224,137 166,131" fill="#9c9a80" />
<polygon points="172,103 216,105 220,112 170,108" fill="#6a7f3c" />
<polygon points="91,150 226,147 234,160 336,166 200,180 91,186" fill="#b3aba0" />
<polygon points="-2,145 16,145 16,162 -2,162" fill="#5c8b29" />
<polygon points="-2,162 170,164 170,182 -2,186" fill="#87924c" />
<polygon points="86,164 150,162 150,172 86,176" fill="#95a052" />
<polygon points="-2,170 60,172 60,184 -2,186" fill="#a09c70" />
<polygon points="-2,184 180,172 200,178 200,181 -2,197" fill="#9b978c" />
<polygon points="-2,186 180,174 180,177 -2,189" fill="#b9b5aa" />
<polygon points="-2,197 200,181 336,166 355,166 355,222 -2,222" fill="#5d616b" />
<polygon points="-2,204 355,190 355,222 -2,222" fill="#565a64" />
<polygon points="101,193 150,190 180,189 264,179 287,184 212,191 178,199 120,201" fill="#15171b" />
<polygon points="173,214 217,208 255,207 225,218 173,218" fill="#15171b" />
<polygon points="264,196 355,181 355,211 321,206 304,201" fill="#14161a" />
<polygon points="300,206 340,204 345,212 310,213" fill="#1a1c20" />
<rect x="-2" y="165" width="15" height="6" fill="#d2432a" />
<ellipse cx="21" cy="160" rx="11" ry="13" fill="#1b1f29" />
<polygon points="223,124 268,124 268,163 244,164 230,158" fill="#171717" />
<rect x="232" y="136" width="34" height="20" fill="#6f6f6f" />
<polygon points="225,136 231,136 234,154 229,155" fill="#bf2129" />
<ellipse cx="240" cy="141" rx="4.4" ry="4.8" fill="#ee2438" />
<ellipse cx="249.5" cy="142" rx="4.4" ry="4.8" fill="#ee2438" />
<ellipse cx="260" cy="144" rx="4.6" ry="5.4" fill="#f1c9c0" />
<ellipse cx="245" cy="150.5" rx="2.6" ry="3" fill="#e9b7a8" />
<ellipse cx="238" cy="151" rx="2.2" ry="2.4" fill="#5a9a5a" />
<polygon points="211,112 264,112 264,124 216,124 211,118" fill="#6b6152" />
<polygon points="214,113 262,113 262,116 214,116" fill="#8a7f6c" />
<polygon points="266,118 322,118 322,164 300,166 268,163" fill="#57524a" />
<polygon points="270,120 300,119 304,134 274,136" fill="#7b7566" />
<polygon points="298,120 318,122 320,150 302,150" fill="#6d6658" />
<polygon points="274,140 300,138 300,150 278,152" fill="#23211e" />
<polygon points="311,126 355,126 355,172 348,170 340,164 311,165" fill="#1b1b1b" />
<polygon points="309,112 355,112 355,126 311,126" fill="#7b7161" />
<polygon points="275,112 294,112 294,118 277,118" fill="#ecebe6" />
<polygon points="306,109 334,109 336,115 308,116" fill="#f0efea" />
<polygon points="92,100 116,100 116,150 93,150" fill="#0f1012" />
<polygon points="153,114 167,113 168,130 154,130" fill="#121316" />
<polygon points="114,114 122,114 122,143 132,132 138,141 130,157 108,154 110,132" fill="#161618" />
<polygon points="122,114 153,114 155,156 135,157 132,132 122,143" fill="#8b8493" />
<polygon points="136,116 150,116 152,150 140,152" fill="#968fa0" />
<polygon points="109,153 119,154 119.5,188 110,188" fill="#101012" />
<polygon points="106,188 119,186 120,199 105,200" fill="#0f0f11" />
<polygon points="145,157 156,157 156,190 146,190" fill="#101012" />
<polygon points="143,192 157,191 158,204 143,205" fill="#0f0f11" />
<rect x="147" y="187" width="7" height="4" fill="#b69a8a" />
<polygon points="133,52 149,49 163,55 172,65 178,80 171,84 157,87 118,85 104,80 106,74 115,58" fill="#dff28c" />
<polygon points="120,60 150,56 160,64 150,80 122,80" fill="#edf8b4" />
<polygon points="160,56 172,66 178,80 170,84 164,70" fill="#b9e644" />
<polygon points="118,85 157,87 157,114 115,114 116,94" fill="#17181a" />
<polygon points="156,85 161,86 160,112 156,114" fill="#8fdc2c" />
<polygon points="102,80 114,79 116,92 104,94" fill="#202022" />
<polygon points="130,30 138,24.5 148,28 151,37 149,49 140,53 132,51 128.5,42" fill="#d3ee7c" />
<polygon points="136,27 148,28.5 150.5,40 146,50.5 138,49.5 134.5,39" fill="#141414" />
<ellipse cx="143.3" cy="41.5" rx="5" ry="5.8" fill="#c9e6e5" />
<polygon points="135,52 138,52 136,62 133,61" fill="#30401a" />
<polygon points="141,58 148,58 147,66 141,66" fill="#5a6a30" />
<polygon points="62,106 98,106 97,132 90,158 83,167 72,152 64,114" fill="#131315" />
<polygon points="76,88 89,83 102,85 99,110 61,110 63,96" fill="#161618" />
<polygon points="84,92 96,90 92,112 82,110" fill="#3a3a40" />
<polygon points="30,112 64,110 72,152 85,174 91,218 76,218 64,184 54,165 42,184 29,218 16,218 25,184 33,158 30,132" fill="#1b1b1d" />
<polygon points="40,122 58,120 66,152 76,180 70,184 56,160 44,150" fill="#2b2b2e" />
<polygon points="58,45 70,54 73,72 74,88 62,96 61,114 43,117 23,110 30,85 34,65 41,52 50,45" fill="#bbe645" />
<polygon points="52,11 72,13 83,21 91,26 89,30 83,31 77,45 70,54 58,55 50,45 51,28" fill="#b4e23a" />
<polygon points="56,14 70,15 80,23 73,42 62,46 55,30" fill="#c6ee5a" />
<polygon points="83,22 91,26 89,30 83,31" fill="#e6f0cc" />
<polygon points="44,58 60,55 66,72 60,90 44,92 40,76" fill="#cdef6c" />
<polygon points="52,60 62,58 64,80 54,84" fill="#a9d933" />
<polyline points="41,59 62,52.5 72,70" fill="none" stroke="#e2ead2" stroke-width="2.6"/>
<polyline points="35,70 31,88" fill="none" stroke="#e4ead6" stroke-width="5"/>
<polygon points="41,93 61,95 61,101 41,100" fill="#e8ecdc" />
<polygon points="43,106 61,105 61,112 43,114" fill="#e8ecdc" />
<polygon points="62,89 75,86 76,91 63,96" fill="#e6eadc" />
<polygon points="24,100 42,104 42,116 23,110" fill="#c4e860" />
<line x1="76" y1="74" x2="87" y2="91" stroke="#ea571c" stroke-width="2" stroke-linecap="round"/>
<polygon points="74,84 86,80 92,90 78,97" fill="#1c1c1e" />
<polygon points="82,95 97,91 95,118 82,120" fill="#2b2b30" />
</g></g></svg>
<!--/PHOTO-->
<div class="hl" id="h4" style="top:840px">Residential trash volume increases as</div>
<div class="hl" id="h5" style="top:860px">pandemic forces people indoors</div>

<!-- SHARE ICONS -->
<svg class="abs" style="left:698px;top:140px" width="8.75" height="14" viewBox="0 0 320 512"><path fill="#333" d="M279.14 288l14.22-92.660h-88.910v-60.130c0-25.350 12.420-50.060 52.240-50.060h40.420V6.260S260.430 0 225.360 0c-73.220 0-121.080 44.380-121.080 124.720v70.620H22.890V288h81.390v224h100.170V288z"/></svg>
<svg class="abs" style="left:725px;top:139.7px" width="14" height="14" viewBox="0 0 512 512"><path fill="#333" d="M459.370 151.716c.325 4.548.325 9.097.325 13.645 0 138.720-105.583 298.558-298.558 298.558-59.452 0-114.680-17.219-161.137-47.106 8.447.974 16.568 1.299 25.340 1.299 49.055 0 94.213-16.568 130.274-44.832-46.132-.975-84.792-31.188-98.112-72.772 6.498.974 12.995 1.624 19.818 1.624 9.421 0 18.843-1.300 27.614-3.573-48.081-9.747-84.143-51.980-84.143-102.985v-1.299c13.969 7.797 30.214 12.670 47.431 13.319-28.264-18.843-46.781-51.005-46.781-87.391 0-19.492 5.197-37.360 14.294-52.954 51.655 63.675 129.300 105.258 216.365 109.807-1.624-7.797-2.599-15.918-2.599-24.040 0-57.828 46.782-104.934 104.934-104.934 30.213 0 57.502 12.670 76.670 33.137 23.715-4.548 46.456-13.320 66.599-25.340-7.798 24.366-24.366 44.833-46.132 57.827 21.117-2.273 41.584-8.122 60.426-16.243-14.292 20.791-32.161 39.308-52.628 54.253z"/></svg>
<svg class="abs" style="left:754px;top:140px" width="14" height="14" viewBox="0 0 512 512"><path fill="#333" d="M502.300 190.800c3.900-3.100 9.700-.2 9.700 4.700V400c0 26.500-21.500 48-48 48H48c-26.500 0-48-21.500-48-48V195.600c0-5 5.700-7.800 9.700-4.700 22.400 17.400 52.100 39.500 154.100 113.600 21.100 15.400 56.700 47.800 92.200 47.600 35.700.3 72-32.800 92.300-47.600 102-74.100 131.600-96.300 154-113.700zM256 320c23.200.4 56.600-29.200 73.400-41.400 132.700-96.300 142.800-104.700 173.400-128.700 5.800-4.500 9.200-11.500 9.200-18.900v-19c0-26.500-21.500-48-48-48H48C21.500 64 0 85.500 0 112v19c0 7.400 3.400 14.300 9.200 18.900 30.600 23.900 40.700 32.400 173.400 128.700 16.800 12.200 50.200 41.800 73.400 41.400z"/></svg>
<svg class="abs" style="left:783px;top:140px" width="14" height="14" viewBox="0 0 512 512"><path fill="#333" d="M448 192V77.250c0-8.490-3.370-16.620-9.370-22.630L393.370 9.370c-6-6-14.140-9.370-22.630-9.370H96C78.330 0 64 14.330 64 32v160c-35.350 0-64 28.650-64 64v112c0 8.840 7.160 16 16 16h48v96c0 17.670 14.330 32 32 32h320c17.670 0 32-14.330 32-32v-96h48c8.840 0 16-7.160 16-16V256c0-35.350-28.650-64-64-64zm-64 256H128v-96h256v96zm0-224H128V64h192v48c0 8.840 7.160 16 16 16h48v96zm48 72c-13.250 0-24-10.750-24-24 0-13.260 10.750-24 24-24s24 10.740 24 24c0 13.250-10.750 24-24 24z"/></svg>

<!-- ARTICLE TEXT -->
<div class="p" id="l1" style="top:186px">State health data illustrates the disproportionate impact that COVID-19 is having on older</div>
<div class="p" id="l2" style="top:213px">Pennsylvanians.</div>
<div class="p" id="l3" style="top:252px">People over the age of 65 make up only about 15% of the state's total population, but they</div>
<div class="p" id="l4" style="top:279px">accounted for more than half of the COVID-19 hospitalizations over the past month, <span class="g">data from</span></div>
<div class="p" id="l5" style="top:306px"><span class="g">the Pennsylvania Department of Health shows</span>.</div>
<div class="p" id="l6" style="top:345px">Residents aged 50 to 64, who make up 21% of the state's population, accounted for 27% of</div>
<div class="p" id="l7" style="top:372px">hospitalizations.&nbsp; Every other age group accounted for a smaller portion of hospitalizations</div>
<div class="p" id="l8" style="top:399px">than their share of the overall population.</div>
<div class="p" id="l9" style="top:478px">Starting on March 26, the department began adding the positive cases and hospitalizations by</div>
<div class="p" id="l10" style="top:505px">age range to its daily COVID-19 updates.</div>
<div class="p" id="l11" style="top:544px">The data shows that about 19% of confirmed COVID-19 cases were seniors over 65, while 40%</div>
<div class="p" id="l12" style="top:571px">were those between the ages of 25 and 49. About 29% were individuals between 50 and 65,</div>
<div class="p" id="l13" style="top:598px">while about 9% were between 19 and 24.</div>

<!--BARCHART-->
<svg class="abs" style="left:740px;top:640px" width="620" height="232" viewBox="0 0 620 232" font-family="Liberation Sans, sans-serif">
<text id="bt" x="21.7" y="31.3" font-size="20" fill="#757575" textLength="518" lengthAdjust="spacingAndGlyphs">COVID-19 cases in Pennsylvania by age: March 6 - April 1</text>
<rect x="81.4" y="47.5" width="12" height="12" rx="1.5" fill="#4285f4"/>
<text x="101.6" y="57.4" font-size="12" fill="#222" textLength="111.4" lengthAdjust="spacingAndGlyphs">percent of population</text>
<rect x="229.7" y="47.5" width="12" height="12" rx="1.5" fill="#fbd164"/>
<text x="249.9" y="57.4" font-size="12" fill="#222" textLength="87.4" lengthAdjust="spacingAndGlyphs">percent of cases</text>
<rect x="353.7" y="47.5" width="12" height="12" rx="1.5" fill="#ff0000"/>
<text x="373.8" y="57.4" font-size="12" fill="#222" textLength="139.2" lengthAdjust="spacingAndGlyphs">Percent of hospitalizations</text>
<line x1="73.0" x2="573.8" y1="76.9" y2="76.9" stroke="#ccc" stroke-width="1"/>
<text x="21.0" y="81.2" font-size="12" fill="#222" textLength="40.7" lengthAdjust="spacingAndGlyphs">60.00%</text>
<line x1="73.0" x2="573.8" y1="147.4" y2="147.4" stroke="#ccc" stroke-width="1"/>
<text x="21.0" y="151.7" font-size="12" fill="#222" textLength="40.7" lengthAdjust="spacingAndGlyphs">40.00%</text>
<line x1="73.0" x2="573.8" y1="218.3" y2="218.3" stroke="#ccc" stroke-width="1"/>
<text x="21.0" y="222.6" font-size="12" fill="#222" textLength="40.7" lengthAdjust="spacingAndGlyphs">20.00%</text>
<polygon points="380.2,180.0 384.0,176.2 384.0,237 380.2,237" fill="#2a56b0"/>
<polygon points="367.1,180.0 370.9,176.2 384.0,176.2 380.2,180.0" fill="#6a9bf7"/>
<rect x="367.1" y="180.0" width="13.1" height="57.0" fill="#3f7cf2"/>
<polygon points="395.2,152.2 399.0,148.4 399.0,237 395.2,237" fill="#a98c3e"/>
<polygon points="382.1,152.2 385.9,148.4 399.0,148.4 395.2,152.2" fill="#ffdd88"/>
<rect x="382.1" y="152.2" width="13.1" height="84.8" fill="#ffd15c"/>
<polygon points="410.0,221.9 413.8,218.1 413.8,237 410.0,237" fill="#990000"/>
<polygon points="396.9,221.9 400.7,218.1 413.8,218.1 410.0,221.9" fill="#ff3a3a"/>
<rect x="396.9" y="221.9" width="13.1" height="15.1" fill="#ff0000"/>
<polygon points="449.3,218.9 453.1,215.1 453.1,237 449.3,237" fill="#2a56b0"/>
<polygon points="436.2,218.9 440.0,215.1 453.1,215.1 449.3,218.9" fill="#6a9bf7"/>
<rect x="436.2" y="218.9" width="13.1" height="18.1" fill="#3f7cf2"/>
<polygon points="464.3,191.0 468.1,187.2 468.1,237 464.3,237" fill="#a98c3e"/>
<polygon points="451.2,191.0 455.0,187.2 468.1,187.2 464.3,191.0" fill="#ffdd88"/>
<rect x="451.2" y="191.0" width="13.1" height="46.0" fill="#ffd15c"/>
<polygon points="479.1,198.0 482.9,194.2 482.9,237 479.1,237" fill="#990000"/>
<polygon points="466.0,198.0 469.8,194.2 482.9,194.2 479.1,198.0" fill="#ff3a3a"/>
<rect x="466.0" y="198.0" width="13.1" height="39.0" fill="#ff0000"/>
<polygon points="532.2,226.0 536.0,222.2 536.0,237 532.2,237" fill="#a98c3e"/>
<polygon points="519.1,226.0 522.9,222.2 536.0,222.2 532.2,226.0" fill="#ffdd88"/>
<rect x="519.1" y="226.0" width="13.1" height="11.0" fill="#ffd15c"/>
<polygon points="547.2,113.2 551.0,109.4 551.0,237 547.2,237" fill="#990000"/>
<polygon points="534.1,113.2 537.9,109.4 551.0,109.4 547.2,113.2" fill="#ff3a3a"/>
<rect x="534.1" y="113.2" width="13.1" height="123.8" fill="#ff0000"/>
</svg>
<!--/BARCHART-->

</body>
</html>
